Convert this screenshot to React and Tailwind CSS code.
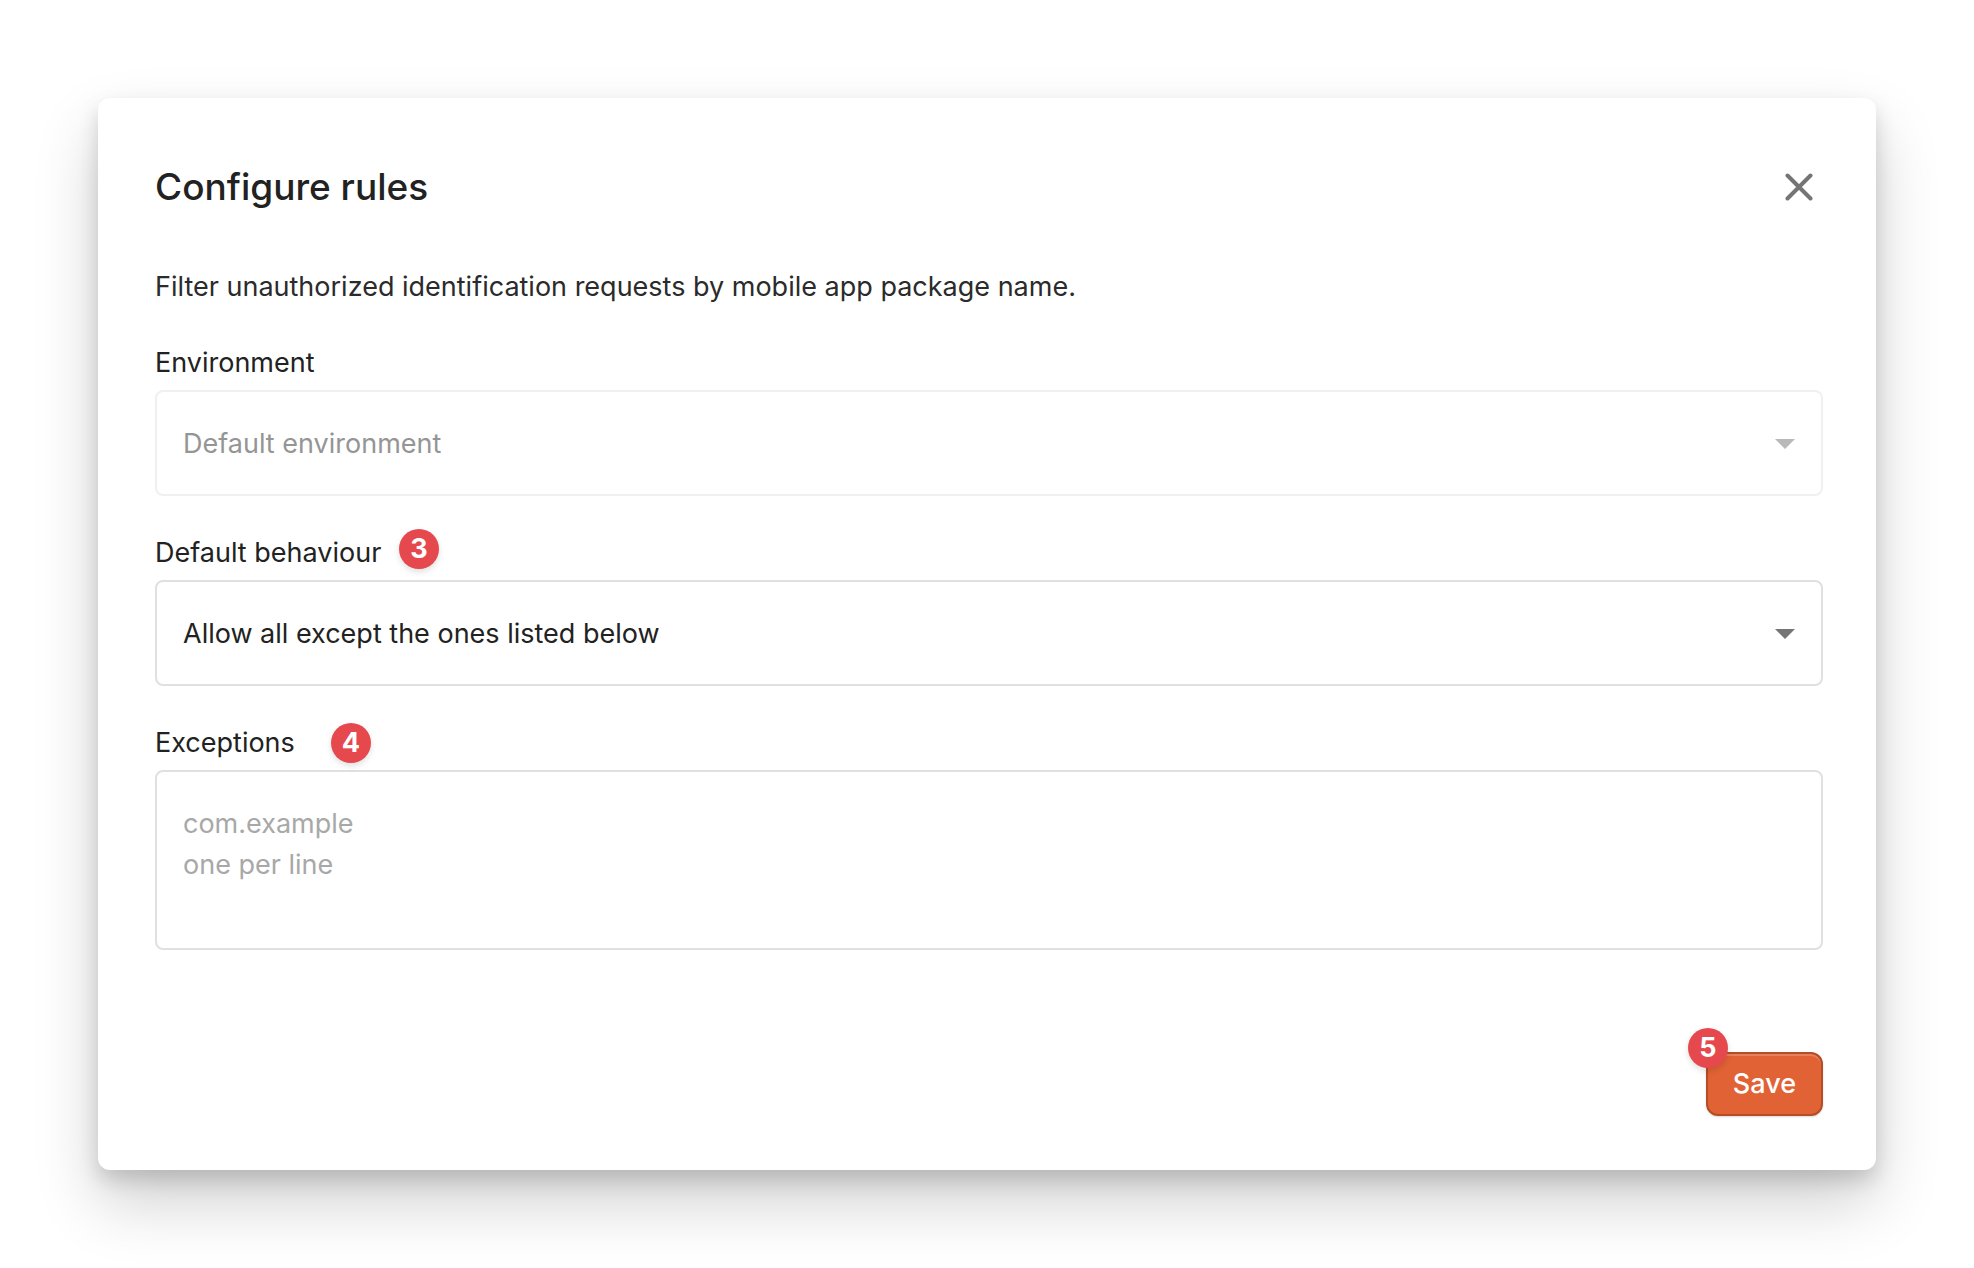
import { useState } from "react";

const FIELD =
  "block w-full rounded-lg border-2 bg-white px-[26px] text-[27px] leading-[41px] text-[#222222] outline-none placeholder:text-[#a8a8a8]";

const ENVIRONMENTS = [{ value: "default", label: "Default environment" }];

const BEHAVIOURS = [
  { value: "allow", label: "Allow all except the ones listed below" },
  { value: "deny", label: "Forbid all except the ones listed below" },
];

function StepBadge({ children, className }) {
  return (
    <span
      className={`absolute flex size-10 items-center justify-center rounded-full bg-[#e5484d] text-[27px] leading-10 font-bold text-white shadow-[0_3px_6px_rgba(0,0,0,0.12)] ${className}`}
    >
      {children}
    </span>
  );
}

function Field({ id, label, badge, children }) {
  return (
    <div className="relative">
      <label htmlFor={id} className="mb-[7px] block text-[27px] leading-10 text-[#222222]">
        {label}
      </label>
      {badge}
      {children}
    </div>
  );
}

function Select({ id, options, disabled, value, onChange }) {
  return (
    <div className="relative">
      <select
        id={id}
        value={value}
        onChange={onChange}
        disabled={disabled}
        className={`${FIELD} h-[106px] appearance-none border-[#e0e0e0] disabled:border-[#f0f0f0] disabled:text-[#959595] disabled:opacity-100`}
      >
        {options.map((o) => (
          <option key={o.value} value={o.value}>{o.label}</option>
        ))}
      </select>
      <svg
        viewBox="0 0 20 10"
        className={`pointer-events-none absolute top-[49px] right-7 h-[10px] w-5 ${disabled ? "fill-[#b9b9b9]" : "fill-[#757575]"}`}
      >
        <path d="M0 0h20L10 10z" />
      </svg>
    </div>
  );
}

export default function App() {
  const [behaviour, setBehaviour] = useState("allow");
  const [exceptions, setExceptions] = useState("");

  return (
    <div className="min-h-screen bg-white p-[98px] font-['Inter','Liberation_Sans',sans-serif]">
      <div
        role="dialog"
        aria-labelledby="rules-title"
        className="rounded-xl bg-white pt-[65px] pr-[53px] pb-[54px] pl-[57px] shadow-[0_32px_64px_rgba(0,0,0,0.19),0_10px_20px_rgba(0,0,0,0.15)]"
      >
        <form onSubmit={(e) => e.preventDefault()}>
          <div className="flex h-12 items-center justify-between">
            <h1 id="rules-title" className="text-[37px] leading-[48px] font-medium text-[#222222]">
              Configure rules
            </h1>
            <button type="button" aria-label="Close" className="flex size-12 items-center justify-center text-[#757575]">
              <svg viewBox="0 0 28 28" className="size-7" fill="none" stroke="currentColor" strokeWidth="4" strokeLinecap="round">
                <path d="M2.5 2.5l23 23M25.5 2.5l-23 23" />
              </svg>
            </button>
          </div>

          <p className="mt-14 text-[27px] leading-10 text-[#2b2b2b]">
            Filter unauthorized identification requests by mobile app package name.
          </p>

          <div className="mt-9 flex flex-col gap-[37px]">
            <Field id="environment" label="Environment">
              <Select id="environment" options={ENVIRONMENTS} disabled value="default" />
            </Field>

            <Field
              id="behaviour"
              label="Default behaviour"
              badge={<StepBadge className="-top-1 left-[244px]">3</StepBadge>}
            >
              <Select
                id="behaviour"
                options={BEHAVIOURS}
                value={behaviour}
                onChange={(e) => setBehaviour(e.target.value)}
              />
            </Field>

            <Field
              id="exceptions"
              label="Exceptions"
              badge={<StepBadge className="top-0 left-44">4</StepBadge>}
            >
              <textarea
                id="exceptions"
                value={exceptions}
                onChange={(e) => setExceptions(e.target.value)}
                placeholder={"com.example\none per line"}
                className={`${FIELD} h-[180px] resize-none border-[#e0e0e0] py-[31px]`}
              />
            </Field>
          </div>

          <div className="mt-[102px] flex justify-end">
            <div className="relative">
              <button
                type="submit"
                className="block h-16 rounded-xl border-2 border-[#b54d25] bg-[#e16235] px-[25px] text-[27px] leading-10 font-medium text-white shadow-[0_1px_2px_rgba(0,0,0,0.15),inset_0_2px_0_rgba(255,255,255,0.2)]"
              >
                Save
              </button>
              <StepBadge className="-top-6 -left-[18px]">5</StepBadge>
            </div>
          </div>
        </form>
      </div>
    </div>
  );
}
